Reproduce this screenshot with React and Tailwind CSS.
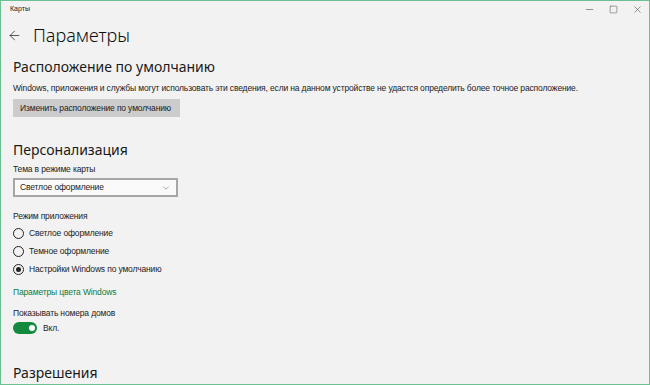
import { ArrowLeft, Minus, Square, X, ChevronDown } from 'lucide-react';

const font = { fontFamily: '"Noto Sans", "Open Sans", sans-serif' };
const small = { fontFamily: '"Liberation Sans", Arial, sans-serif' };

const Radio = ({ checked, label }) => (
  <div className="flex items-center gap-[5px] h-[18px]">
    <div className="w-[11px] h-[11px] rounded-full border-[1.5px] border-[#222] flex items-center justify-center">
      {checked && <div className="w-[5px] h-[5px] rounded-full bg-[#222]" />}
    </div>
    <span style={small} className="text-[8.5px] tracking-[-0.15px] text-[#222]">{label}</span>
  </div>
);

export default function App() {
  return (
    <div style={font} className="w-[650px] h-[385px] bg-[#f2f2f2] border border-[#6cc091] overflow-hidden flex flex-col">
      {/* Title bar */}
      <div className="flex items-center justify-between h-[17px] pl-[9px] pr-[6px]">
        <span style={small} className="text-[7px] text-[#222]">Карты</span>
        <div className="flex items-center gap-[14px] text-[#444]">
          <Minus className="w-[11px] h-[11px]" strokeWidth={1.2} />
          <Square className="w-[9px] h-[9px]" strokeWidth={1.3} />
          <X className="w-[11px] h-[11px]" strokeWidth={1.2} />
        </div>
      </div>

      {/* Header */}
      <div className="flex items-center h-[28px] mt-[3px] pl-[6px] gap-[11px]">
        <ArrowLeft className="w-[15px] h-[15px] text-[#222]" strokeWidth={1.2} />
        <span className="text-[18px] font-light text-[#111] leading-none">Параметры</span>
      </div>

      <div className="pl-[12px] flex flex-col">
        <div className="mt-[9px] text-[14px] text-[#1a1a1a] leading-[18px]">Расположение по умолчанию</div>
        <div style={small} className="mt-[6px] text-[8.5px] tracking-[-0.15px] text-[#222] leading-[12px] whitespace-nowrap">
          Windows, приложения и службы могут использовать эти сведения, если на данном устройстве не удастся определить более точное расположение.
        </div>
        <button style={small} className="mt-[5px] self-start h-[18px] w-[167px] bg-[#cccccc] text-[8.5px] tracking-[-0.15px] text-[#222] text-left pl-[7px] whitespace-nowrap">
          Изменить расположение по умолчанию
        </button>

        <div className="mt-[24px] text-[14px] text-[#1a1a1a] leading-[18px]">Персонализация</div>
        <div style={small} className="mt-[4px] text-[8.5px] tracking-[-0.15px] text-[#222] leading-[12px]">Тема в режиме карты</div>
        <div className="mt-[3px] w-[165px] h-[19px] border-2 border-[#a6a6a6] bg-[#fafafa] flex items-center justify-between pl-[5px] pr-[5px]">
          <span style={small} className="text-[8.5px] tracking-[-0.15px] text-[#222]">Светлое оформление</span>
          <ChevronDown className="w-[10px] h-[10px] text-[#666]" strokeWidth={1.3} />
        </div>

        <div style={small} className="mt-[13px] text-[8.5px] tracking-[-0.15px] text-[#222] leading-[12px]">Режим приложения</div>
        <div className="mt-[2px] flex flex-col">
          <Radio label="Светлое оформление" />
          <Radio label="Темное оформление" />
          <Radio checked label="Настройки Windows по умолчанию" />
        </div>

        <div style={small} className="mt-[8px] text-[8.5px] tracking-[-0.15px] text-[#107c41] leading-[12px]">Параметры цвета Windows</div>
        <div style={small} className="mt-[9px] text-[8.5px] tracking-[-0.15px] text-[#222] leading-[12px]">Показывать номера домов</div>
        <div className="mt-[3px] flex items-center gap-[6px]">
          <div className="w-[24px] h-[12px] rounded-full bg-[#138a3f] flex items-center justify-end pr-[2.5px]">
            <div className="w-[6px] h-[6px] rounded-full bg-white" />
          </div>
          <span style={small} className="text-[8.5px] tracking-[-0.15px] text-[#222]">Вкл.</span>
        </div>

        <div className="mt-[29px] text-[14px] text-[#1a1a1a] leading-[18px]">Разрешения</div>
      </div>
    </div>
  );
}
